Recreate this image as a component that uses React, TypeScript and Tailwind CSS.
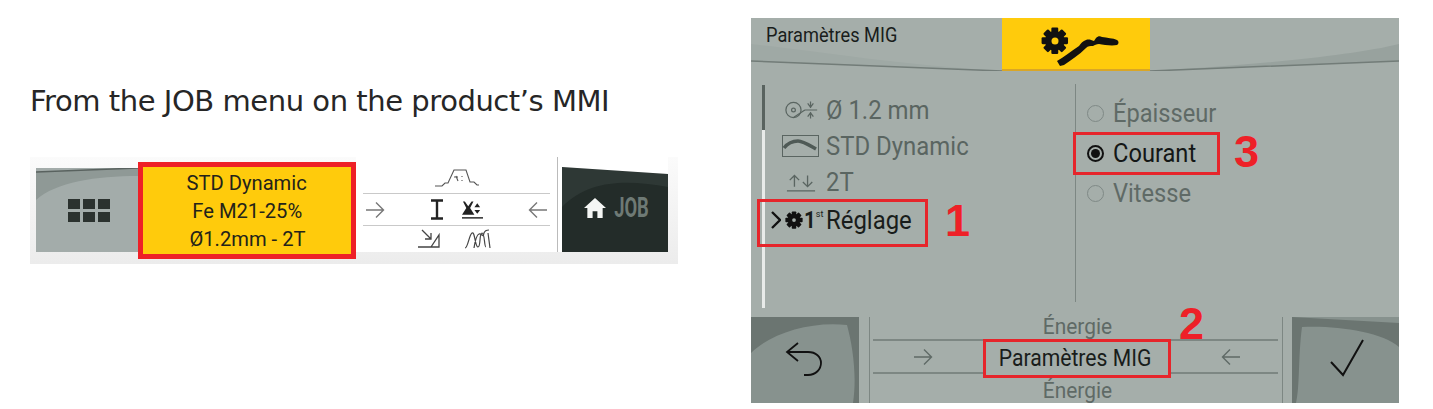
import React from 'react';

const roboto = "font-['Roboto',sans-serif]";

function GearIcon({ size, className }: { size: number; className?: string }) {
  const teeth = [0, 45, 90, 135];
  return (
    <svg width={size} height={size} viewBox="0 0 24 24" className={className}>
      {teeth.map((a) => (
        <rect key={a} x="9" y="0.5" width="6" height="23" rx="1" fill="currentColor" transform={`rotate(${a} 12 12)`} />
      ))}
      <circle cx="12" cy="12" r="8.5" fill="currentColor" />
      <circle cx="12" cy="12" r="2.5" fill="#a5aeaa" />
    </svg>
  );
}

function Arrow({ dir, className }: { dir: 'left' | 'right'; className?: string }) {
  return (
    <svg width="20" height="18" viewBox="0 0 20 18" fill="none" stroke="currentColor" strokeWidth="1.4" className={className}>
      {dir === 'right' ? <path d="M1 9h17M11 1.5 18.5 9 11 16.5" /> : <path d="M19 9H2M9 1.5 1.5 9 9 16.5" />}
    </svg>
  );
}

function Condensed({ children, className }: { children: React.ReactNode; className?: string }) {
  return <span className={`inline-block whitespace-nowrap ${className}`}>{children}</span>;
}

function JobStrip() {
  return (
    <div className="w-[648px] h-[107px] bg-linear-to-b from-[#fbfbfb] to-[#ececec] flex items-start pl-[6px] pr-[10px]">
      {/* grid button */}
      <div className="relative w-[102px] h-[84px] mt-[11px] bg-[#a3acaa] flex items-center justify-center shrink-0 overflow-hidden">
        <svg className="absolute inset-0" width="102" height="84" viewBox="0 0 102 84">
          <path d="M0 4 102 0V8C60 8 20 14 0 32Z" fill="#8f9996" />
          <path d="M0 4 102 0" stroke="#59625f" strokeWidth="1.5" />
        </svg>
        <div className="relative grid grid-cols-3 gap-x-[3px] gap-y-[3px] ml-[4px] -mb-[1px]">
          {[0, 1, 2, 3, 4, 5].map((i) => (
            <div key={i} className="w-[12px] h-[10px] bg-[#2b322f]" />
          ))}
        </div>
      </div>
      {/* selected job */}
      <div className="w-[218px] h-[97px] mt-[5px] shrink-0 bg-[#ffcb0c] border-[5px] border-[#ee2027] flex flex-col items-center justify-center text-[#23231a] text-[21px] leading-[28px] font-['Roboto',sans-serif]">
        <Condensed className="scale-x-[0.96]">STD Dynamic</Condensed>
        <Condensed className="scale-x-[0.96]">Fe M21-25%</Condensed>
        <Condensed className="scale-x-[0.96]">Ø1.2mm - 2T</Condensed>
      </div>
      {/* menu */}
      <div className="flex-1 h-[95px] bg-white flex flex-col px-[7px] text-[#333]">
        <div className="h-[36px] flex items-end justify-center pb-[5px]">
          <svg width="46" height="20" viewBox="0 0 46 20" fill="none" stroke="#555" strokeWidth="1.100">
            <path d="M1 18h7l3-3h3L20 2h12l4 12h4l3 3h2" />
            <path d="M20 9h4M22 8l2 5M28 8v1M28 12v1" />
          </svg>
        </div>
        <div className="h-[33px] border-y border-[#c9c9c9] flex items-center justify-between px-[2px]">
          <Arrow dir="right" className="text-[#777]" />
          <div className="flex items-center gap-[19px]">
            <svg width="12" height="21" viewBox="0 0 12 21" stroke="#222" fill="none" strokeWidth="2.400">
              <path d="M0 1.500h12M0 19.500h12" />
              <path d="M6 2v17" />
            </svg>
            <svg width="21" height="20" viewBox="0 0 22 20" fill="#222">
              <path d="M1 1h2l3.500 5L10 1h2L8.500 8 13 15H0L4.500 8Z" />
              <path d="M16 3l3 4h-6ZM16 14l-3-4h6Z" />
              <rect x="0" y="17.500" width="22" height="1.500" />
            </svg>
          </div>
          <Arrow dir="left" className="text-[#777]" />
        </div>
        <div className="h-[26px] flex items-center justify-center gap-[24px] -ml-[3px]">
          <svg width="22" height="20" viewBox="0 0 22 20" fill="none" stroke="#444" strokeWidth="1.300">
            <path d="M4 1l9 9M13 4v6H7M0 18h21l0-12-8 12" />
          </svg>
          <svg width="28" height="20" viewBox="0 0 28 20" fill="none" stroke="#444" strokeWidth="1.200">
            <path d="M1 19C4 19 5 6 8 4c3-2 3 14 6 14s1-14 4-14 2 14 4 14M10 19c1-6 2-13 5-14 3-1 4 5 5-1 1-3 3-3 5-3M24 4l2 15" />
          </svg>
        </div>
      </div>
      {/* job button */}
      <div className="w-[111px] h-[95px] shrink-0 border-l border-[#bbb] pl-[4px] pt-[10px] bg-white">
        <div className="relative w-[106px] h-[85px] bg-[#232c29] flex items-center justify-center gap-[9px] pl-[6px] overflow-hidden">
          <svg className="absolute inset-0" width="106" height="85" viewBox="0 0 106 85">
            <path d="M0 0 106 7V20C70 14 30 10 0 40Z" fill="#2e3835" />
            <path d="M0 0 106 7V0H0Z" fill="#fff" />
          </svg>
          <svg className="relative -mt-[3px] -ml-[4px]" width="22" height="22" viewBox="0 0 23 21" fill="#f4f6f4">
            <path d="M11.500 0 23 10.500h-3.500V21H14v-7H9v7H3.500V10.500H0Z" />
          </svg>
          <span className="relative -mt-[3px] text-[#6e7a75] text-[27px] font-bold leading-none scale-x-[0.68] -mx-[9px] font-['Roboto',sans-serif]">JOB</span>
        </div>
      </div>
    </div>
  );
}

function ListRow({ icon, children }: { icon: React.ReactNode; children: React.ReactNode }) {
  return (
    <div className="h-[36px] flex items-center text-[26px] leading-none text-[#5a6561]">
      <div className="w-[42px] shrink-0 flex items-center">{icon}</div>
      <Condensed className="origin-left scale-x-[0.92]">{children}</Condensed>
    </div>
  );
}

function Radio({ on }: { on?: boolean }) {
  return (
    <span className={`w-[17px] h-[17px] rounded-full border flex items-center justify-center shrink-0 ${on ? 'border-[#111] border-2' : 'border-[#7f8986]'}`}>
      {on && <span className="w-[9px] h-[9px] rounded-full bg-[#111]" />}
    </span>
  );
}

function RadioLabel({ children }: { children: React.ReactNode }) {
  return <Condensed className="origin-left scale-x-[0.91]">{children}</Condensed>;
}

function MigPanel() {
  return (
    <div className={`w-[648px] h-[385px] bg-[#a5aeaa] flex flex-col ${roboto}`}>
      {/* header */}
      <div className="relative h-[53px] flex shrink-0">
        <svg className="absolute inset-0" width="648" height="53" viewBox="0 0 648 53" fill="none">
          <path d="M0 26C60 32 140 46 251 53L0 43Z" fill="#9fa9a5" />
          <path d="M648 26C600 38 500 47 399 53L648 43Z" fill="#98a29e" />
          <path d="M0 43 251 53M399 53 648 43" stroke="#727c78" strokeWidth="1.500" />
        </svg>
        <div className="relative w-[251px] pl-[15px] pt-[5px] text-[20px] leading-[24px] text-[#191d1b]">
          <Condensed className="origin-left scale-x-[0.91]">Paramètres MIG</Condensed>
        </div>
        <div className="relative w-[148px] h-[53px] bg-[#ffcb0c] border-b-2 border-[#d9a626] flex items-start pl-[39px] pt-[9px]">
          {/* gear and torch */}
          <svg width="82" height="40" viewBox="0 0 82 40" fill="#111">
            <g transform="translate(0 0) scale(1.150)">
              {[0, 45, 90, 135].map((a) => (
                <rect key={a} x="9" y="0.500" width="6" height="23" rx="1" transform={`rotate(${a} 12 12)`} />
              ))}
              <circle cx="12" cy="12" r="8.500" />
            </g>
            <circle cx="14" cy="14" r="3.500" fill="#ffcb0c" />
            <path d="M16 34C23 30 30 24 38 19c2-3 4-5 7-6 3-1 5 0 8 1l2-3c2-2 4-2 6-1 5 1 11 1 15 3 2 1 2 4 0 5-5 1-13 0-18-1-3 0-4 1-6 2-3 0-5 0-7 2C38 28 30 33 23 38l-4 1Z" />
          </svg>
        </div>
      </div>
      {/* settings */}
      <div className="flex-1 flex min-h-0">
        <div className="w-[12px] mt-[14px] ml-[11px] shrink-0 h-[223px] flex flex-col">
          <div className="w-[3px] h-[45px] bg-[#59635f]" />
          <div className="w-[3px] flex-1 bg-[#e8ebe9]" />
        </div>
        <div className="w-[301px] shrink-0 pt-[21px] pl-[10px]">
          <ListRow
            icon={
              <svg width="36" height="20" viewBox="0 0 38 20" fill="none" stroke="#5a6561" strokeWidth="1.300">
                <circle cx="10" cy="10" r="8" />
                <circle cx="10" cy="10" r="2" />
                <path d="M10 18 22 10M28 1v7M25 3l3 4 3-4M28 19v-7M25 17l3-4 3 4M22 10h13" />
              </svg>
            }
          >
            Ø 1.2 mm
          </ListRow>
          <ListRow
            icon={
              <svg width="37" height="24" viewBox="0 0 37 24" fill="none" stroke="#5a6561" className="-ml-[2px]">
                <rect x="0.500" y="1.500" width="36" height="21" />
                <path d="M2 14C6 9 10 7 16 7c5 0 11 4 18 8" strokeWidth="3.500" stroke="#4f5a56" />
              </svg>
            }
          >
            STD Dynamic
          </ListRow>
          <ListRow
            icon={
              <svg width="30" height="22" viewBox="0 0 32 22" fill="none" stroke="#5a6561" strokeWidth="1.400" className="ml-[2px]">
                <path d="M9 16V4M4 9l5-5 5 5M23 4v12M18 11l5 5 5-5M1 20.500h30" />
              </svg>
            }
          >
            2T
          </ListRow>
          <div className="relative h-[40px] -ml-[13px] flex items-center text-[#191d1b] text-[26px] leading-none">
            <svg width="10" height="20" viewBox="0 0 10 20" fill="none" stroke="#111" strokeWidth="2.300">
              <path d="M1 2l8 8-8 8" />
            </svg>
            <GearIcon size={18} className="text-[#111] ml-[4px]" />
            <span className="font-bold text-[24px] scale-x-[0.85]">1</span>
            <span className="text-[9px] -mt-[12px] -ml-[1px]">st</span>
            <Condensed className="origin-left scale-x-[0.92] ml-[3px]">Réglage</Condensed>
            <div className="absolute left-[-14px] top-[-1px] w-[171px] h-[48px] border-[3px] border-[#e6252b]" />
            <span className="absolute left-[174px] top-[-2px] text-[45px] leading-[46px] font-bold text-[#ee2027] font-['Liberation_Sans',sans-serif]">1</span>
          </div>
        </div>
        <div className="flex-1 h-[218px] mt-[13px] pt-[9px] pl-[11px] border-l border-[#7d8783] self-start">
          <div className="h-[40px] flex items-center gap-[9px] text-[26px] leading-none text-[#5f6a66]">
            <Radio />
            <RadioLabel>Épaisseur</RadioLabel>
          </div>
          <div className="relative h-[40px] flex items-center gap-[9px] text-[26px] leading-none text-[#141716]">
            <Radio on />
            <RadioLabel>Courant</RadioLabel>
            <div className="absolute left-[-14px] top-[-1px] w-[147px] h-[43px] border-[3px] border-[#e6252b]" />
            <span className="absolute left-[147px] top-[-4px] text-[45px] leading-[46px] font-bold text-[#ee2027] font-['Liberation_Sans',sans-serif]">3</span>
          </div>
          <div className="h-[40px] flex items-center gap-[9px] text-[26px] leading-none text-[#5f6a66]">
            <Radio />
            <RadioLabel>Vitesse</RadioLabel>
          </div>
        </div>
      </div>
      {/* bottom bar */}
      <div className="relative h-[86px] shrink-0 flex">
        <div className="relative w-[108px] bg-[#87928e] flex items-center justify-center overflow-hidden">
          <svg className="absolute inset-0" width="108" height="86" viewBox="0 0 108 86">
            <path d="M0 0H108V86H102C106 60 102 30 96 8 60 4 20 16 0 36Z" fill="#6b7571" />
          </svg>
          <svg className="relative -ml-[2px] -mt-[1px]" width="38" height="38" viewBox="0 0 38 38" fill="none" stroke="#111" strokeWidth="1.800">
            <path d="M13 2 2 11l11 9M2 11h21c8 0 13 5 13 11s-5 12-13 12h-4" />
          </svg>
        </div>
        <div className="w-[10px] shrink-0" />
        <div className="w-[4px] shrink-0 border-l border-[#7d8783]" />
        <div className="relative flex-1 flex flex-col items-center text-[#5f6a66] text-[22px] leading-none">
          <div className="h-[23px] -mt-[1px] ml-[4px] scale-x-[0.95]">Énergie</div>
          <div className="relative w-full h-[35px] border-y-2 border-[#7d8783] flex items-center justify-between pl-[40px] pr-[37px]">
            <Arrow dir="right" />
            <Arrow dir="left" />
          </div>
          <div className="h-[26px] pt-[6px] ml-[4px] scale-x-[0.95]">Énergie</div>
          <div className="absolute left-[110px] top-[22px] w-[188px] h-[39px] bg-[#a5aeaa] border-[3px] border-[#e6252b] flex items-center justify-center text-[#191d1b] text-[23px] leading-none pr-[4px]">
            <Condensed className="scale-x-[0.92]">Paramètres MIG</Condensed>
          </div>
          <span className="absolute left-[306px] top-[-16px] text-[45px] leading-[46px] font-bold text-[#ee2027] font-['Liberation_Sans',sans-serif]">2</span>
        </div>
        <div className="w-[4px] shrink-0" />
        <div className="w-[10px] shrink-0 border-l border-[#7d8783]" />
        <div className="relative w-[107px] bg-[#87928e] flex items-center justify-center overflow-hidden">
          <svg className="absolute inset-0" width="107" height="86" viewBox="0 0 107 86">
            <path d="M0 0 107 6V30C90 14 40 8 10 10 6 40 8 70 4 86H0Z" fill="#6b7571" />
          </svg>
          <svg className="relative -mt-[4px] -mr-[2px]" width="36" height="40" viewBox="0 0 36 40" fill="none" stroke="#111" strokeWidth="2">
            <path d="M2 24 14 37 34 2" />
          </svg>
        </div>
      </div>
    </div>
  );
}

export default function App() {
  return (
    <div className="w-[1433px] h-[409px] bg-white flex overflow-hidden">
      <div className="w-[751px] pl-[30px] shrink-0">
        <p className="mt-[80px] h-[77px] text-[29px] leading-[42px] tracking-[-0.45px] text-[#262626] font-['DejaVu_Sans',sans-serif]">
          From the JOB menu on the product’s MMI
        </p>
        <JobStrip />
      </div>
      <div className="pt-[18px]">
        <MigPanel />
      </div>
    </div>
  );
}
